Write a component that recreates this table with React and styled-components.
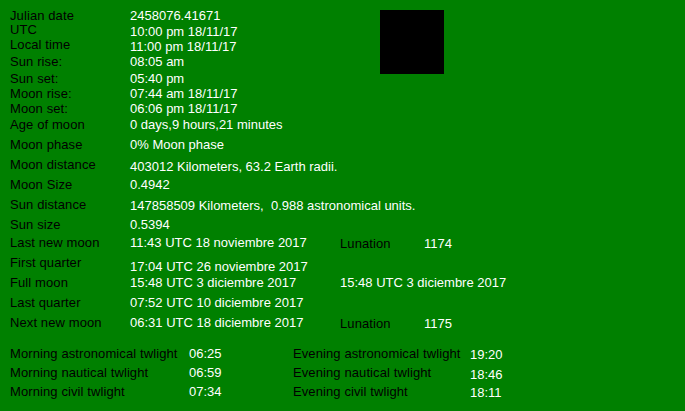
import React from 'react'
import styled, {createGlobalStyle} from 'styled-components';

// global reset, the whole window is the green panel
const GlobalStyle = createGlobalStyle`
html, body {
  margin: 0;
  padding: 0;
  background: #008000;
}
body {
  font-family: "Liberation Sans", Arial, sans-serif;
  font-size: 13px;
}
`

const Panel = styled.div`
width: 685px;
height: 411px;
background: #008000;
box-sizing: border-box;
padding: 8px 0 0 10px;
overflow: hidden;
`

// top block: time rows on the left, black picture box on the right
const TopSection = styled.div`
display: flex;
align-items: flex-start;
`

const TopRows = styled.div`
width: 370px;
`

const MoonPicture = styled.div`
width: 64px;
height: 64px;
margin-top: 2px;
background: #000;
`

// main 4 column grid: label / value / extra / extra value
const Row = styled.div`
display: grid;
grid-template-columns: 120px 210px 84px 1fr;
height: ${p => p.h}px;
line-height: 15px;
white-space: pre;
`

// labels are black and a touch wider than the values
const Label = styled.div`
color: #000;
letter-spacing: 0.1px;
padding-top: ${p => p.shift || 0}px;
`

const Value = styled.div`
color: #fff;
padding-top: ${p => p.shift || 0}px;
`

// twilight block at the bottom
const TwilightSection = styled.div`
margin-top: 11px;
`

const TwRow = styled.div`
display: grid;
grid-template-columns: 179px 104px 177px 1fr;
height: 19px;
line-height: 15px;
white-space: pre;
`

const topRows = [
  ['Julian date', '2458076.41671', 14, 0],
  ['UTC', '10:00 pm 18/11/17', 15, 2],
  ['Local time', '11:00 pm 18/11/17', 17, 2],
  ['Sun rise:', '08:05 am', 17, 0],
  ['Sun set:', '05:40 pm', 15, 0],
  ['Moon rise:', '07:44 am 18/11/17', 15, 0],
  ['Moon set:', '06:06 pm 18/11/17', 16, 0],
]

const rows = [
  {label: 'Age of moon', value: '0 days,9 hours,21 minutes', h: 20},
  {label: 'Moon phase', value: '0% Moon phase', h: 20},
  {label: 'Moon distance', value: '403012 Kilometers, 63.2 Earth radii.', h: 20, shift: 2},
  {label: 'Moon Size', value: '0.4942', h: 20},
  {label: 'Sun distance', value: '147858509 Kilometers,  0.988 astronomical units.', h: 20, shift: 1},
  {label: 'Sun size', value: '0.5394', h: 18},
  {label: 'Last new moon', value: '11:43 UTC 18 noviembre 2017', h: 20, extraLabel: 'Lunation', extraValue: '1174', extraShift: 1},
  {label: 'First quarter', value: '17:04 UTC 26 noviembre 2017', h: 20, shift: 4},
  {label: 'Full moon', value: '15:48 UTC 3 diciembre 2017', h: 20, extraWhite: '15:48 UTC 3 diciembre 2017'},
  {label: 'Last quarter', value: '07:52 UTC 10 diciembre 2017', h: 20},
  {label: 'Next new moon', value: '06:31 UTC 18 diciembre 2017', h: 20, extraLabel: 'Lunation', extraValue: '1175', extraShift: 1},
]

const twilight = [
  ['Morning astronomical twlight', '06:25', 'Evening astronomical twlight', '19:20', 0, 1],
  ['Morning nautical twlight', '06:59', 'Evening nautical twlight', '18:46', 0, 2],
  ['Morning civil twlight', '07:34', 'Evening civil twlight', '18:11', 0, 1],
]

const App = () => {
  return (
    <>
      <GlobalStyle />
      <Panel>
        <TopSection>
          <TopRows>
            {topRows.map(([l, v, h, s]) => (
              <Row key={l} h={h}>
                <Label>{l}</Label>
                <Value shift={s}>{v}</Value>
              </Row>
            ))}
          </TopRows>
          <MoonPicture />
        </TopSection>

        {rows.map(r => (
          <Row key={r.label} h={r.h}>
            <Label>{r.label}</Label>
            <Value shift={r.shift}>{r.value}</Value>
            {r.extraLabel && <Label shift={r.extraShift}>{r.extraLabel}</Label>}
            {r.extraValue && <Value shift={r.extraShift}>{r.extraValue}</Value>}
            {r.extraWhite && <Value style={{gridColumn: '3 / 5'}}>{r.extraWhite}</Value>}
          </Row>
        ))}

        <TwilightSection>
          {twilight.map(([ml, mv, el, ev, ms, es]) => (
            <TwRow key={ml}>
              <Label>{ml}</Label>
              <Value shift={ms}>{mv}</Value>
              <Label>{el}</Label>
              <Value shift={es}>{ev}</Value>
            </TwRow>
          ))}
        </TwilightSection>
      </Panel>
    </>
  )
}

export default App;
